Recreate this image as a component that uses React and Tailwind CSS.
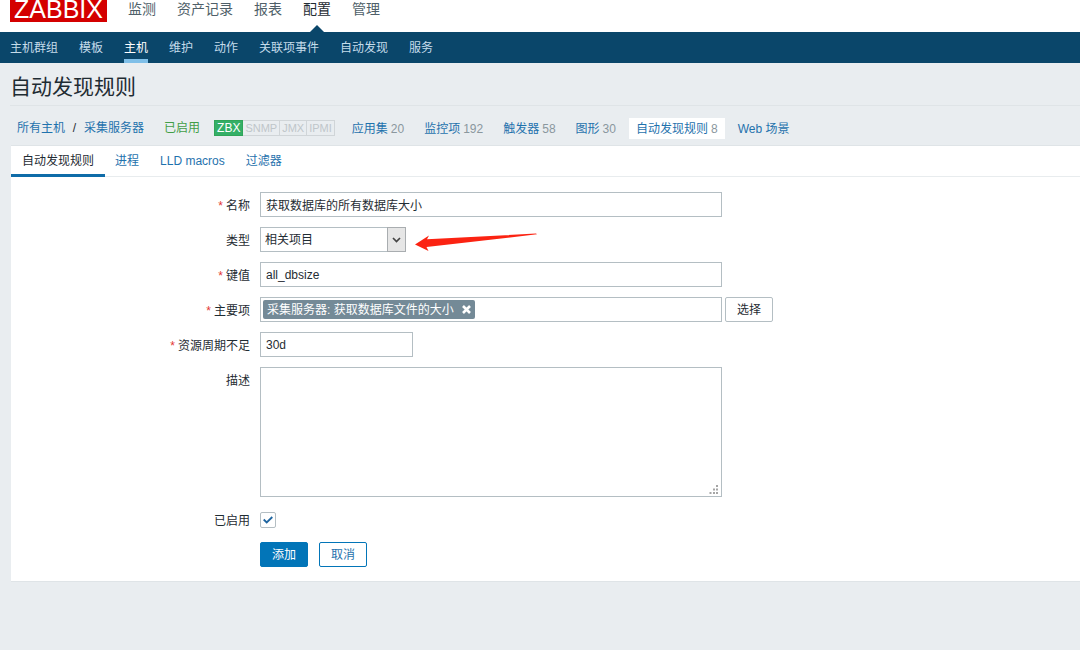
import React, { useState } from "react";

const mainMenu = ["监测", "资产记录", "报表", "配置", "管理"];
const subMenu = ["主机群组", "模板", "主机", "维护", "动作", "关联项事件", "自动发现", "服务"];
const tabs = ["自动发现规则", "进程", "LLD macros", "过滤器"];
const interfaces = ["SNMP", "JMX", "IPMI"];

const hostLinks = [
  { label: "应用集", count: 20 },
  { label: "监控项", count: 192 },
  { label: "触发器", count: 58 },
  { label: "图形", count: 30 },
  { label: "自动发现规则", count: 8, active: true },
  { label: "Web 场景" },
];

const inputClass =
  "h-[25px] border border-[#b4bec3] bg-white text-[12px] text-[#1f2c33] outline-none";

const Header = () => (
  <header>
    <div className="flex h-8 items-start bg-white pl-[10px]">
      <a
        href="#"
        className="h-[22px] w-[97px] bg-[#d40000] text-center text-[25px] leading-[19px] text-white"
      >
        ZABBIX
      </a>
      <nav className="ml-[21px] flex h-8 gap-[21px] text-[14px] leading-[18px]">
        {mainMenu.map((item) => (
          <a
            key={item}
            href="#"
            className={`relative h-8 ${item === "配置" ? "text-[#1f2c33]" : "text-[#4f5f69]"}`}
          >
            {item}
            {item === "配置" && (
              <svg
                className="absolute bottom-0 left-1/2 -translate-x-1/2"
                width="14"
                height="7"
                viewBox="0 0 14 7"
              >
                <path d="M0 7L7 0L14 7Z" fill="#0a466a" />
              </svg>
            )}
          </a>
        ))}
      </nav>
    </div>
    <nav className="flex h-[31px] gap-[21px] bg-[#0a466a] pl-[10px] text-[12px] leading-[33px]">
      {subMenu.map((item) => (
        <a
          key={item}
          href="#"
          className={
            item === "主机"
              ? "h-[31px] border-b-4 border-[#7fbfe8] text-white"
              : "text-[#c5dcea]"
          }
        >
          {item}
        </a>
      ))}
    </nav>
  </header>
);

const HostBar = () => (
  <div className="flex h-[39px] items-center pt-[5px] pl-[17px] text-[12px] whitespace-nowrap">
    <a href="#" className="leading-[20px] text-[#1f72ad]">所有主机</a>
    <span className="w-[19px] text-center text-[#1f2c33]">/</span>
    <a href="#" className="leading-[20px] text-[#1f72ad]">采集服务器</a>
    <span className="ml-5 leading-[20px] text-[#429e47]">已启用</span>
    <div className="ml-[14px] flex h-4 text-[12px] leading-[14px]">
      <span className="border border-[#2fa558] bg-[#34af67] px-[2px] text-white">ZBX</span>
      {interfaces.map((item) => (
        <span
          key={item}
          className="border border-l-0 border-[#d0d5d8] px-[2px] text-[11px] text-[#bfc6ca]"
        >
          {item}
        </span>
      ))}
    </div>
    <div className="ml-[10px] flex items-center gap-[6px]">
      {hostLinks.map(({ label, count, active }) => (
        <a
          key={label}
          href="#"
          className={`h-[21px] px-[7px] leading-[23px] text-[#1f72ad] ${
            active ? "bg-white" : ""
          }`}
        >
          {label}
          {count && <span className="ml-[3px] text-[#8a979e]">{count}</span>}
        </a>
      ))}
    </div>
  </div>
);

const Row = ({ label, htmlFor, required, children }) => (
  <div className="flex gap-[10px]">
    <label
      htmlFor={htmlFor}
      className="h-[25px] w-[239px] shrink-0 text-right leading-[28px] text-[#1f2c33]"
    >
      {required && <span className="mr-[3px] text-[#e33734]">*</span>}
      {label}
    </label>
    {children}
  </div>
);

const RuleForm = () => {
  const [name, setName] = useState("获取数据库的所有数据库大小");
  const [key, setKey] = useState("all_dbsize");
  const [lifetime, setLifetime] = useState("30d");
  const [description, setDescription] = useState("");
  const [enabled, setEnabled] = useState(true);

  return (
    <form className="flex flex-col gap-[10px] pt-[15px] pb-[14px]" onSubmit={(e) => e.preventDefault()}>
      <Row label="名称" htmlFor="name" required>
        <input
          id="name"
          className={`${inputClass} w-[462px] px-[5px]`}
          value={name}
          onChange={(e) => setName(e.target.value)}
        />
      </Row>

      <Row label="类型" htmlFor="type">
        <div className="relative">
          <select id="type" className={`${inputClass} w-[146px] appearance-none px-1`}>
            <option>相关项目</option>
          </select>
          {/* Drop-down handle */}
          <div className="pointer-events-none absolute top-0 right-0 flex h-[25px] w-[19px] items-center justify-center border border-[#a9adb0] bg-[#e6e6e6]">
            <svg width="9" height="6" viewBox="0 0 9 6" fill="none" stroke="#444" strokeWidth="1.7">
              <path d="M1 1L4.5 4.5L8 1" />
            </svg>
          </div>
          {/* Pointer to the type field */}
          <svg
            className="absolute top-[6px] left-[155px]"
            width="123"
            height="19"
            viewBox="0 0 123 19"
            fill="#fb2312"
          >
            <path d="M0 11.5L14 2.5L12 6.300L121 0.500L122 1.300L11.500 14L13.500 18Z" />
          </svg>
        </div>
      </Row>

      <Row label="键值" htmlFor="key" required>
        <input
          id="key"
          className={`${inputClass} w-[462px] px-[5px]`}
          value={key}
          onChange={(e) => setKey(e.target.value)}
        />
      </Row>

      <Row label="主要项" htmlFor="master" required>
        <div className="flex gap-[3px]">
          <div className="flex h-[25px] w-[462px] items-center border border-[#b4bec3] px-[2px]">
            <span className="flex h-[19px] items-center gap-2 rounded-xs bg-[#748a97] px-1 text-white">
              采集服务器: 获取数据库文件的大小
              <button type="button" aria-label="移除">
                <svg width="9" height="9" viewBox="0 0 9 9" stroke="#fff" strokeWidth="2.6">
                  <path d="M1 1L8 8M8 1L1 8" />
                </svg>
              </button>
            </span>
          </div>
          <button
            id="master"
            type="button"
            className="h-[25px] w-12 rounded-xs border border-[#b4bec3] bg-white text-[#1f2c33]"
          >
            选择
          </button>
        </div>
      </Row>

      <Row label="资源周期不足" htmlFor="lifetime" required>
        <input
          id="lifetime"
          className={`${inputClass} w-[153px] px-[5px]`}
          value={lifetime}
          onChange={(e) => setLifetime(e.target.value)}
        />
      </Row>

      <Row label="描述" htmlFor="description">
        <div className="relative h-[130px] w-[462px]">
          <textarea
            id="description"
            className="block h-full w-full resize-none border border-[#b4bec3] bg-white p-[5px] outline-none"
            value={description}
            onChange={(e) => setDescription(e.target.value)}
          />
          <svg
            className="pointer-events-none absolute right-[3px] bottom-[2px]"
            width="10"
            height="10"
            viewBox="0 0 10 10"
            fill="#a5a5a5"
          >
            <path d="M7 0h2v2h-2zM4 3.500h2v2h-2zM7 3.500h2v2h-2zM0.500 7h2v2h-2zM4 7h2v2h-2zM7 7h2v2h-2z" />
          </svg>
        </div>
      </Row>

      <Row label="已启用" htmlFor="enabled">
        <div className="relative flex h-[25px] items-center">
          <input
            id="enabled"
            type="checkbox"
            className="size-4 appearance-none rounded-xs border border-[#b4bec3] bg-white"
            checked={enabled}
            onChange={(e) => setEnabled(e.target.checked)}
          />
          {enabled && (
            <svg
              className="pointer-events-none absolute left-[3px]"
              width="10"
              height="8"
              viewBox="0 0 10 8"
              fill="none"
              stroke="#1f65a0"
              strokeWidth="1.8"
            >
              <path d="M0.700 3.500L3.700 6.500L9.300 1" />
            </svg>
          )}
        </div>
      </Row>

      <div className="flex gap-[11px] pl-[249px]">
        <button
          type="submit"
          className="h-[25px] w-12 rounded-xs border border-[#0275b8] bg-[#0275b8] text-white"
        >
          添加
        </button>
        <button
          type="button"
          className="h-[25px] w-12 rounded-xs border border-[#0275b8] bg-white text-[#1f72ad]"
        >
          取消
        </button>
      </div>
    </form>
  );
};

const App = () => {
  return (
    <div className="min-h-screen bg-[#e9edf0] font-['Liberation_Sans','Noto_Sans_CJK_SC',sans-serif] text-[12px]">
      <Header />
      <h1 className="ml-[10px] h-[43px] border-b border-[#dfe4e7] text-[21px] leading-[47px] text-[#1f2c33]">
        自动发现规则
      </h1>
      <HostBar />
      <main className="ml-[11px] border-t border-b border-[#dfe4e7] bg-white">
        <div className="flex h-[31px] border-b border-[#e8ecee] leading-[31px]">
          {tabs.map((tab) => (
            <a
              key={tab}
              href="#"
              className={
                tab === "自动发现规则"
                  ? "mr-[10px] h-[31px] border-b-3 border-[#0f6ca8] px-[11px] text-[#1f2c33]"
                  : "mr-[21px] text-[#1f72ad]"
              }
            >
              {tab}
            </a>
          ))}
        </div>
        <RuleForm />
      </main>
    </div>
  );
};

export default App;
